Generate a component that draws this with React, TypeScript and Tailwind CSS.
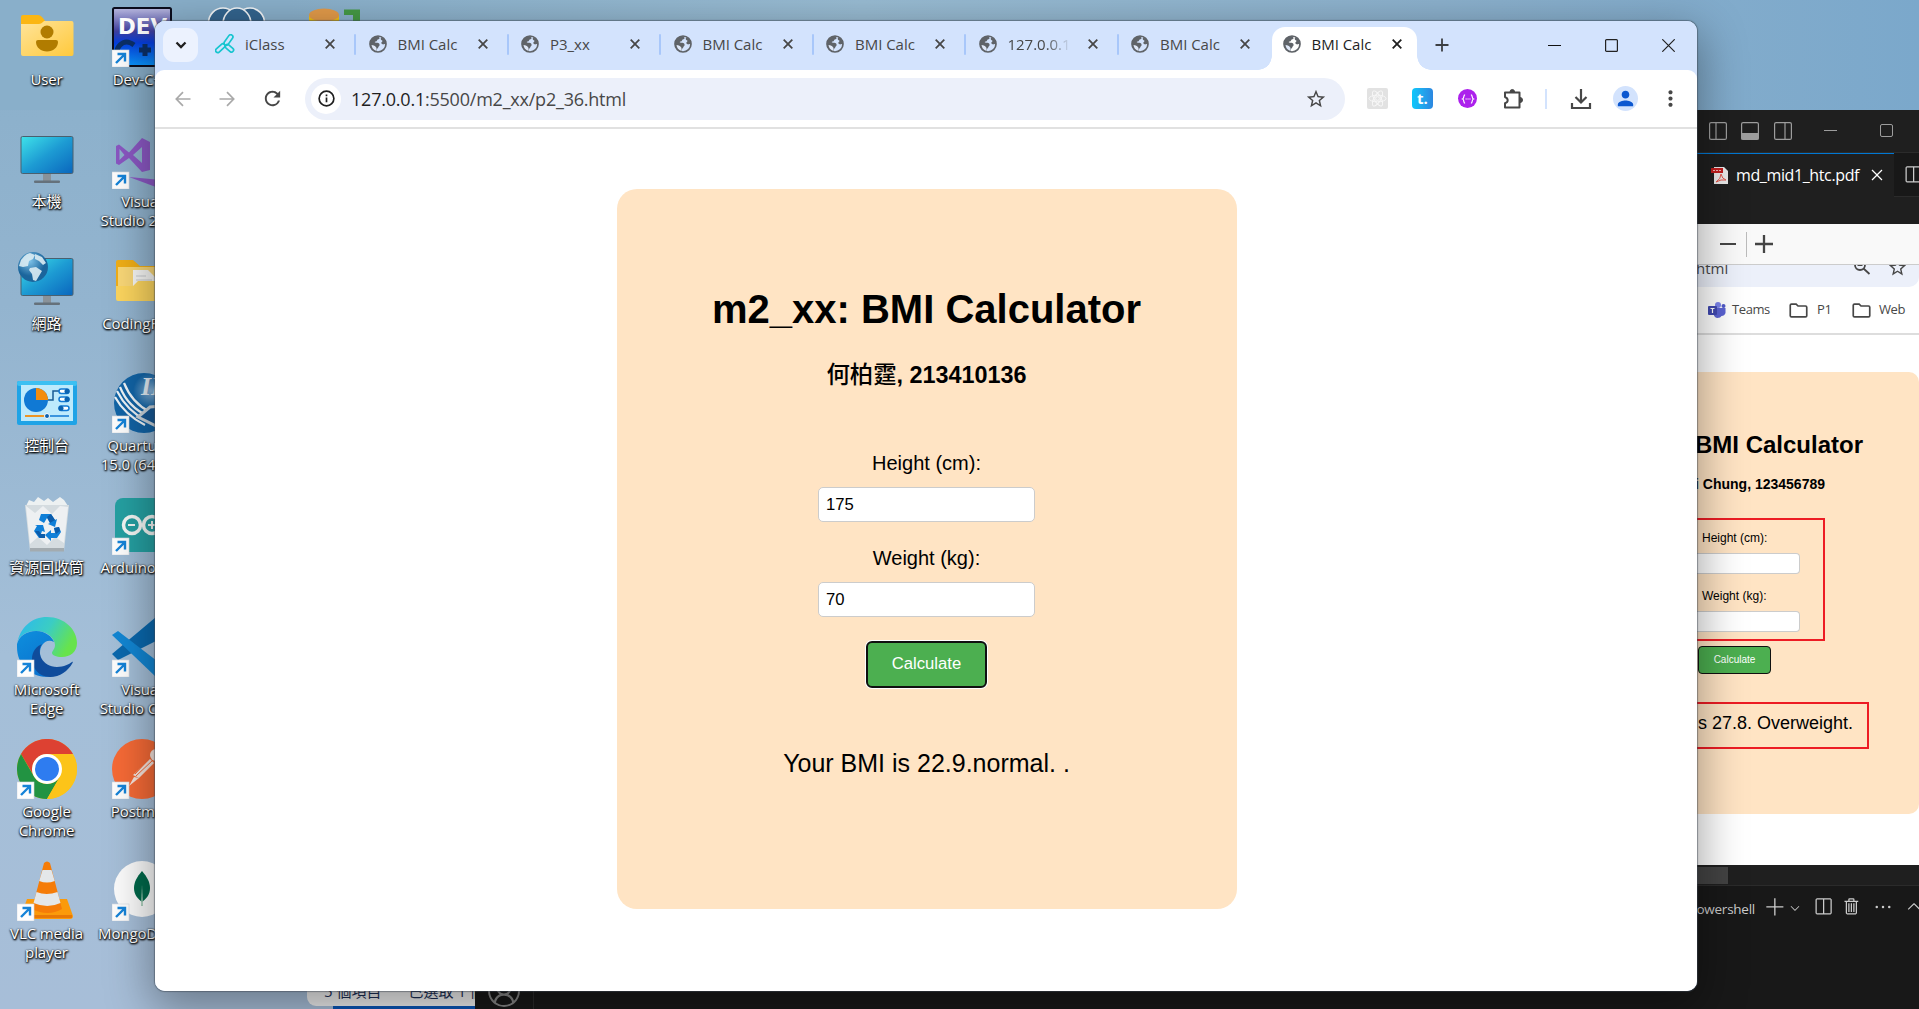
import React from "react";
import { MdStarBorder, MdRefresh, MdMoreVert, MdPerson } from "react-icons/md";
import { VscSplitHorizontal, VscTrash, VscAdd, VscChevronDown, VscChevronUp, VscClose, VscEllipsis, VscAccount } from "react-icons/vsc";

/* ---------- Desktop icons ---------- */

const Shortcut = () => (
  <g>
    <rect x="0" y="43" width="17" height="17" fill="#fdfdfd" stroke="#d5dbe0" strokeWidth="0.6" />
    <path d="M4 56 L12.5 47.5 M5.5 47 H13 V54.5" stroke="#1583d8" strokeWidth="2.4" fill="none" />
  </g>
);

const Art = ({ children }: { children: React.ReactNode }) => (
  <svg viewBox="0 0 60 60" className="h-[60px] w-[60px] shrink-0">{children}</svg>
);

const UserFolder = () => (
  <Art>
    <defs>
      <linearGradient id="fold" x1="0" y1="0" x2="1" y2="1"><stop offset="0" stopColor="#ffe49a" /><stop offset="1" stopColor="#ffc93c" /></linearGradient>
    </defs>
    <path d="M4 10q0-2 2-2h15q2 0 4 2l4 5v8H4z" fill="#fbb613" />
    <path d="M4 17h18q2 0 4-2l1-1h27.500q2 0 2 2v31q0 2-2 2H6q-2 0-2-2z" fill="url(#fold)" />
    <circle cx="30" cy="25" r="6.500" fill="#b17c00" />
    <path d="M21 33h18q2 0 2 2c0 5.500-5 9.500-11 9.500s-11-4-11-9.500q0-2 2-2z" fill="#b17c00" />
  </Art>
);

const MonitorShape = () => (
  <g>
    <defs>
      <linearGradient id="mon" x1="0" y1="0" x2="1" y2="1"><stop offset="0" stopColor="#3fe3ea" /><stop offset=".5" stopColor="#1d9bd3" /><stop offset="1" stopColor="#0a66bd" /></linearGradient>
    </defs>
    <rect x="26" y="44" width="8" height="8" fill="#8a9299" />
    <rect x="17" y="51.500" width="26" height="2.500" rx="1" fill="#65717b" />
    <rect x="4" y="7.500" width="52" height="37" rx="1.500" fill="url(#mon)" stroke="#4a606f" strokeWidth="1" />
  </g>
);

const Computer = () => <Art><MonitorShape /></Art>;

const Network = () => (
  <Art>
    <MonitorShape />
    <defs><radialGradient id="glb" cx=".4" cy=".3"><stop offset="0" stopColor="#7ec2e8" /><stop offset="1" stopColor="#1b659c" /></radialGradient></defs>
    <circle cx="16" cy="16" r="15" fill="url(#glb)" />
    <path d="M4 9q4-6 9-7l5 2-2 4-4 2-1 5-5 1-4-1zM18 3l7 3 4 6-3 2-4-4-4-2zM13 17l6-1 6 4-3 5-3 5-3-1-1-6-3-4z" fill="#dcecf3" opacity=".9" />
  </Art>
);

const ControlPanel = () => (
  <Art>
    <rect x="0" y="8" width="60" height="44" rx="2" fill="#1fa3e6" />
    <rect x="0" y="8" width="60" height="5" rx="2" fill="#3cc0f2" />
    <rect x="4" y="12" width="52" height="36" fill="#bdeafc" />
    <circle cx="19" cy="27" r="12" fill="#1079d4" />
    <path d="M19 15a12 12 0 0 1 12 12H19z" fill="#f28c0d" />
    <path d="M31 27h5v-9h7" stroke="#175b94" strokeWidth="1.500" fill="none" />
    <g fill="#fff" stroke="#1079d4" strokeWidth="1.500">
      <rect x="42" y="16" width="10" height="4.500" rx="2.200" /><rect x="42" y="24" width="10" height="4.500" rx="2.200" /><rect x="42" y="33" width="10" height="4.500" rx="2.200" />
    </g>
    <g fill="#0b62b0"><circle cx="50" cy="18.300" r="2.500" /><circle cx="50" cy="26.300" r="2.500" /><circle cx="44" cy="35.300" r="2.500" /></g>
    <path d="M8 43h21" stroke="#f28c0d" strokeWidth="1.800" /><path d="M30 43h22" stroke="#1079d4" strokeWidth="1.500" />
    <circle cx="30" cy="43" r="2.500" fill="#0b62b0" stroke="#fff" />
  </Art>
);

const RecycleBin = () => (
  <Art>
    <path d="M9 11l3-6 5 2 4-5 6 4 4-3 5 4 7-5 4 3 4 6z" fill="#edf1f2" />
    <path d="M8 10h44l-5 46H13z" fill="#d5dce0" />
    <path d="M9 11l9 7 8-7 9 8 8-8 8 1-4 36-9-6-8 8-9-8-8 7z" fill="#f5f7f8" opacity=".75" />
    <path d="M13 53h34v3.500H13z" fill="#a3abb0" />
    <g fill="#0f7fd8">
      <path d="M24 19h10l4 6 2-1-2 8-7-3 2-1-3-5-3 5-5-3z" />
      <path d="M37 33l5-1 2 5-4 6h-6v3l-6-6 6-5v3h4z" />
      <path d="M18 30l8 0 2 7-3-1-1 3 3 4h-5l-5-7 3-5z" />
    </g>
    <path d="M18 36l5 7h5v-4h-4l-2-3zM34 19l4 6-5 3-3-6zM37 33l5-1 1 4-4 3z" fill="#0b5cab" />
  </Art>
);

const Edge = () => (
  <Art>
    <defs>
      <linearGradient id="e1" x1="0" y1="0" x2="1" y2=".4"><stop offset="0" stopColor="#2bb7f2" /><stop offset=".55" stopColor="#3bcdc3" /><stop offset="1" stopColor="#67e34c" /></linearGradient>
      <linearGradient id="e2" x1="0" y1="0" x2=".6" y2="1"><stop offset="0" stopColor="#0e8fdd" /><stop offset="1" stopColor="#0a72cf" /></linearGradient>
    </defs>
    <path d="M0 27C3 10 15 0 30 0c18 0 30 13 30 26 0 9-7 14-15 14-6 0-10-2-10-4s3-4 3-8c0-6-7-14-19-14C8 14 1 20 0 27z" fill="url(#e1)" />
    <path d="M0 27C2 19 10 14 19 14c10 0 16 6 18 11-8-4-14 3-14 11 0 12 9 19 18 22-22 7-41-7-41-28z" fill="url(#e2)" />
    <path d="M25 27c-6 8 0 23 15 23 7 0 12-3 15-5 1-.5 1 0 .5 1C51 54 43 60 33 60 21 60 15 50 15 42c0-8 5-13 10-15z" fill="#0f4c9c" />
    <Shortcut />
  </Art>
);

const Chrome = () => (
  <Art>
    <circle cx="30" cy="30" r="30" fill="#fcc419" />
    <path d="M4 15A30 30 0 0 1 56 15H30a15 15 0 0 0-13 22z" fill="#dd4132" />
    <path d="M4 15l13 22.500A15 15 0 0 0 43 37.500L30 60A30 30 0 0 1 4 15z" fill="#229342" />
    <path d="M56 15A30 30 0 0 1 30 60l13-22.500A15 15 0 0 0 42 15z" fill="#fcc419" />
    <circle cx="30" cy="30" r="15" fill="#fff" /><circle cx="30" cy="30" r="12" fill="#2e7cf0" />
    <Shortcut />
  </Art>
);

const Vlc = () => (
  <Art>
    <path d="M10 38h40l6 17q0 3-3 3H7q-3 0-3-3z" fill="#fb9a0a" /><path d="M5 54h50v3H5z" fill="#e87906" />
    <path d="M27 2q3-3 6 0l12 46q-14 8-30 0z" fill="#f57c08" />
    <path d="M25.500 9h9l3.200 11q-7.700 3-15.500 0zM19.500 31q10 4 21 0l3 11q-13 6-27 0z" fill="#e4e7e9" />
    <Shortcut />
  </Art>
);

const DevCpp = () => (
  <Art>
    <defs><linearGradient id="dev" x1="0" y1="0" x2="0" y2="1"><stop offset="0" stopColor="#b9b9df" /><stop offset=".4" stopColor="#3f3f9e" /><stop offset=".6" stopColor="#063edc" /><stop offset="1" stopColor="#0a97ff" /></linearGradient></defs>
    <rect x="1" y="1" width="58" height="58" rx="1.500" fill="url(#dev)" stroke="#0b0d1d" strokeWidth="2" />
    <text x="6" y="27" fontSize="22" fontWeight="bold" fontFamily="DejaVu Sans" fill="#fff" textLength="49" lengthAdjust="spacingAndGlyphs">DEV</text>
    <path d="M22 38q-8-6-14 0t0 14M33 37v12M27 43h12" stroke="#0b2f66" strokeWidth="5" fill="none" />
    <Shortcut />
  </Art>
);

const VisualStudio = () => (
  <Art>
    <path fillRule="evenodd" d="M4 17l3-1.500 10 8L30 9l8 4v28l-8 2-13-14-10 7-3-1.500zM7.500 20v11l5-5zM21 26l9 8V18z" fill="#8a57c2" />
    <path d="M17 48l43 4v12z" fill="#8a57c2" />
    <Shortcut />
  </Art>
);

const CodingFolder = () => (
  <Art>
    <path d="M4 11q0-2 2-2h15l7 6h28v30H4z" fill="#f0ae17" />
    <path d="M6 16h50v20H6z" fill="#f9d777" /><path d="M21 19h15l8 8v12H21z" fill="#f7f7f5" /><path d="M24 25h10M24 29h16M24 33h16" stroke="#c9ccd0" />
    <path d="M4 35h17l5-5h32v20H6q-2 0-2-2z" fill="#fcd55e" />
  </Art>
);

const Quartus = () => (
  <Art>
    <defs><radialGradient id="quar" cx=".62" cy=".3"><stop offset="0" stopColor="#8cb6da" /><stop offset=".6" stopColor="#1264a6" /></radialGradient></defs>
    <circle cx="32" cy="30" r="30" fill="url(#quar)" />
    <path d="M8 14q8 20 28 29M5 18q10 20 30 30M3 24q10 18 30 28M12 10q8 20 26 29" stroke="#eef4f8" strokeWidth="2.200" fill="none" />
    <path d="M26 44l12-10 24-2v30z" fill="#175996" stroke="#c9d3da" strokeWidth="3" />
    <text x="29" y="22" fontSize="26" fontStyle="italic" fontWeight="bold" fontFamily="Liberation Serif" fill="#e5eef6">II</text>
    <Shortcut />
  </Art>
);

const Arduino = () => (
  <Art>
    <rect x="3" y="3" width="60" height="54" rx="8" fill="#25a0a2" />
    <g fill="none" stroke="#f4f7f5" strokeWidth="3.500"><circle cx="20" cy="30" r="8.500" /><circle cx="40" cy="30" r="8.500" /><path d="M16 30h7M36 30h8M40 26v8" strokeWidth="2" /></g>
    <Shortcut />
  </Art>
);

const VsCode = () => (
  <Art>
    <path d="M0 37L44 0l14 5v12L6 43z" fill="#0a68ad" />
    <path d="M0 18l6-4 52 40-14 6z" fill="#1286d3" />
    <Shortcut />
  </Art>
);

const Postman = () => (
  <Art>
    <circle cx="30" cy="30" r="30" fill="#f66a36" />
    <circle cx="44" cy="16" r="6" fill="#f6e4dc" />
    <path d="M38 20l4 4-15 15-6-3zM22 38l5 1-10 8z" fill="#f6e4dc" /><path d="M41 21L24 37M37 20l-14 15" stroke="#f66a36" />
    <Shortcut />
  </Art>
);

const Mongo = () => (
  <Art>
    <circle cx="30" cy="28" r="28" fill="#fbfbfb" />
    <path d="M30 10c5 6 8 11 8 17 0 7-4 11-8 14-4-3-8-7-8-14 0-6 3-11 8-17z" fill="#00684a" /><path d="M30 24l1 21h-2z" fill="#a9cdb9" />
    <Shortcut />
  </Art>
);

const PgAdmin = () => (
  <Art>
    <g fill="#33658f" stroke="#f3f6f8" strokeWidth="1.600"><ellipse cx="16" cy="16" rx="14.500" ry="15" /><ellipse cx="43" cy="16" rx="14.500" ry="15" /><ellipse cx="30" cy="17" rx="14" ry="16" /></g>
  </Art>
);

const Database = () => (
  <Art>
    <path d="M7 8v30h30V8z" fill="#f3c30f" /><ellipse cx="22" cy="8" rx="15" ry="6.500" fill="#e39b4a" />
    <path d="M42 2.500h16V20h-7V8h-9z" fill="#459a45" />
  </Art>
);

type Item = { label: string; art: React.ReactNode };
const columns: Item[][] = [
  [
    { label: "User", art: <UserFolder /> },
    { label: "本機", art: <Computer /> },
    { label: "網路", art: <Network /> },
    { label: "控制台", art: <ControlPanel /> },
    { label: "資源回收筒", art: <RecycleBin /> },
    { label: "Microsoft\nEdge", art: <Edge /> },
    { label: "Google\nChrome", art: <Chrome /> },
    { label: "VLC media\nplayer", art: <Vlc /> },
  ],
  [
    { label: "Dev-C++", art: <DevCpp /> },
    { label: "Visual\nStudio 2022", art: <VisualStudio /> },
    { label: "CodingFiles", art: <CodingFolder /> },
    { label: "Quartus II\n15.0 (64-bit)", art: <Quartus /> },
    { label: "Arduino IDE", art: <Arduino /> },
    { label: "Visual\nStudio Code", art: <VsCode /> },
    { label: "Postman", art: <Postman /> },
    { label: "MongoDBCo", art: <Mongo /> },
  ],
  [{ label: "", art: <PgAdmin /> }],
  [{ label: "", art: <Database /> }],
];

const Desktop = () => (
  <div className="-ml-px flex pt-[7px]">
    {columns.map((items, c) => (
      <div key={c} className="flex w-[95px] shrink-0 flex-col">
        {items.map((it, i) => (
          <div key={i} className="flex h-[122px] flex-col items-center">
            {it.art}
            <div className="whitespace-pre pt-[3px] text-center text-[15px] leading-[19px] tracking-[-0.1px] text-white [text-shadow:1px_1px_2px_#000,0_1px_2px_#000,0_0_2px_#0009]">{it.label}</div>
          </div>
        ))}
      </div>
    ))}
  </div>
);

/* ---------- Browser window ---------- */

const Globe = () => (
  <svg viewBox="0 0 18 18" className="h-[18px] w-[18px] shrink-0">
    <circle cx="9" cy="9" r="8" fill="none" stroke="#5f6368" strokeWidth="1.700" />
    <path d="M1 8.500C1.500 4 5 1 9.500 1l1 1.800c.3 1-.8 1.500-1.700 1.700-.8.300-.5 1.300-1.300 1.700-.7.300-1.700 0-1.700.9 0 .8 1.400.7 2.600.7 1.500 0 2.200 1 2.200 2.100s-1.300 1.200-1.300 2.300c0 1-1.300.9-1.400 2.600L7.500 17C3.500 16 1 12.500 1 8.500z" fill="#5f6368" />
    <path d="M2.500 10c2 0 4 1.200 4.700 2.600.6 1.400.5 2.700.3 3.400C4.500 15 2.800 13 2.500 10z" fill="#dfe8f8" />
    <path d="M12 2.500c-.5 1.200-.3 2.500.7 2.700 1 .2 1 1.200.1 1.900-.9.600-.5 2 .7 2.200 1.200.3 1.500-.4 3.300-.3C16.800 5.500 14.800 3 12 2.500z" fill="#5f6368" />
  </svg>
);

const ClassMark = () => (
  <svg viewBox="0 0 20 20" className="h-[20px] w-[20px] shrink-0" fill="none" stroke="#17c5cf" strokeWidth="1.700">
    <rect x="11.300" y="0" width="4.400" height="12" rx="2.200" transform="rotate(35 13.500 6)" />
    <rect x="3.200" y="8.700" width="4.200" height="11" rx="2.100" transform="rotate(48 5.300 14.200)" />
    <rect x="12.300" y="9.500" width="4.200" height="9.500" rx="2.100" transform="rotate(-50 14.400 14.200)" />
  </svg>
);

const Cross = ({ bold }: { bold?: boolean }) => (
  <svg viewBox="0 0 10 10" className="h-[10px] w-[10px] shrink-0"><path d="M.7.7l8.600 8.600M9.300.7L.7 9.300" stroke={bold ? "#1f1f1f" : "#474747"} strokeWidth="1.800" /></svg>
);

const TabBody = ({ title, mark, bold }: { title: string; mark?: React.ReactNode; bold?: boolean }) => (
  <div className={`flex h-[34px] w-[150px] items-center pl-[11px] ${bold ? "text-[#1f1f1f]" : "text-[#474747]"}`}>
    <div className="flex w-[20px] justify-center">{mark ?? <Globe />}</div>
    <div className={`ml-[10px] w-[63px] overflow-hidden whitespace-nowrap text-[15px] tracking-[-0.02px] ${title.startsWith("127") ? "[mask-image:linear-gradient(90deg,#000_60%,transparent)]" : ""}`}>{title}</div>
    <div className="ml-[17px]"><Cross bold={bold} /></div>
  </div>
);

const tabs = ["iClass", "BMI Calc", "P3_xx", "BMI Calc", "BMI Calc", "127.0.0.1:5500", "BMI Calc"];

const TabStrip = () => (
  <div className="flex h-[49px] items-start bg-[#d3e3fd] pl-[8px]">
    <div className="mt-[7px] flex h-[34px] w-[35px] items-center justify-center rounded-[11px] bg-[#ecf2fe]">
      <svg viewBox="0 0 12 8" className="h-[8px] w-[12px]"><path d="M1.500 1.500L6 6l4.500-4.500" fill="none" stroke="#1f1f1f" strokeWidth="2.300" /></svg>
    </div>
    <div className="ml-[6px] flex pt-[6px]">
      {tabs.map((t, i) => (
        <div key={i} className="flex w-[152.500px] items-center">
          <TabBody title={t} mark={i === 0 ? <ClassMark /> : undefined} />
          {i < 6 && <div className="h-[21px] w-[2px] shrink-0 rounded bg-[#a8c7fa]" />}
        </div>
      ))}
    </div>
    <div className="mt-[6px] flex h-[43px]">
      <div className="-ml-[14px] h-[14px] w-[14px] self-end bg-[radial-gradient(circle_at_0_0,#d3e3fd_13.500px,#fff_14px)]" />
      <div className="flex w-[145px] rounded-t-[13px] bg-white"><div className="-ml-px"><TabBody title="BMI Calc" bold /></div></div>
      <div className="h-[14px] w-[14px] self-end bg-[radial-gradient(circle_at_100%_0,#d3e3fd_13.500px,#fff_14px)]" />
    </div>
    <svg viewBox="0 0 14 14" className="ml-[4px] mt-[17px] h-[14px] w-[14px]"><path d="M7 .5v13M.5 7h13" stroke="#3c3f43" strokeWidth="1.800" /></svg>
    <div className="ml-auto mr-[22px] flex gap-[44px] pt-[18px]">
      <svg viewBox="0 0 13 13" className="h-[13px] w-[13px]"><path d="M0 6.500h13" stroke="#111" strokeWidth="1.200" /></svg>
      <svg viewBox="0 0 13 13" className="h-[13px] w-[13px]"><rect x=".6" y=".6" width="11.800" height="11.800" rx="1" fill="none" stroke="#222" strokeWidth="1.200" /></svg>
      <svg viewBox="0 0 13 13" className="h-[13px] w-[13px]"><path d="M.3.3l12.400 12.400M12.700.3L.3 12.700" stroke="#222" strokeWidth="1.200" /></svg>
    </div>
  </div>
);

const Arrow = ({ flip }: { flip?: boolean }) => (
  <svg viewBox="0 0 16 16" className={`h-[16px] w-[16px] ${flip ? "-scale-x-100" : ""}`}><path d="M15.500 8H1.500M8 1.200L1.300 8 8 14.800" fill="none" stroke="#a9a9a9" strokeWidth="1.700" /></svg>
);

const Toolbar = () => (
  <div className="rounded-t-[9px] bg-white">
    <div className="flex h-[57px] items-center pl-[20px] text-[#474747]">
      <Arrow /><div className="ml-[28px]"><Arrow flip /></div>
      <MdRefresh className="ml-[26px] h-[23px] w-[23px]" />
      <div className="ml-[21px] flex h-[42px] w-[1040px] items-center rounded-full bg-[#ecf0fa] pl-[6px] pr-[18px]">
        <div className="flex h-[30px] w-[30px] items-center justify-center rounded-full bg-white">
          <svg viewBox="0 0 18 18" className="h-[17px] w-[17px]"><circle cx="9" cy="9" r="7.800" fill="none" stroke="#1f1f1f" strokeWidth="1.800" /><path d="M9 8v5M9 4.800v1.700" stroke="#1f1f1f" strokeWidth="1.800" /></svg>
        </div>
        <div className="ml-[10px] pt-px text-[18px] tracking-[-0.22px] text-[#474747]"><span className="text-[#1f1f1f]">127.0.0.1</span>:5500/m2_xx/p2_36.html</div>
        <MdStarBorder className="ml-auto h-[22px] w-[22px]" />
      </div>
      <div className="ml-[22px] flex h-[21px] w-[21px] items-center justify-center rounded-[2px] bg-[#e2e2e2]">
        <svg viewBox="0 0 20 20" className="h-[19px] w-[19px]" fill="none" stroke="#f8f8f8"><ellipse cx="10" cy="10" rx="9" ry="3.500" /><ellipse cx="10" cy="10" rx="9" ry="3.500" transform="rotate(60 10 10)" /><ellipse cx="10" cy="10" rx="9" ry="3.500" transform="rotate(120 10 10)" /><circle cx="10" cy="10" r="2" /></svg>
      </div>
      <div className="ml-[24px] flex h-[21px] w-[21px] items-center justify-center rounded-[4px] bg-linear-to-r from-[#08c8fb] to-[#2b86e0] pb-px text-[15px] font-bold leading-none text-white">t.</div>
      <div className="ml-[25px] flex h-[19px] w-[19px] items-center justify-center rounded-full bg-[#ac20ec]">
        <svg viewBox="0 0 16 12" className="h-[10px] w-[14px]" fill="none" stroke="#fff" strokeWidth="1.400"><path d="M4.500 1C2 1 4 5 1.500 6 4 7 2 11 4.500 11M11.500 1C14 1 12 5 14.500 6 12 7 14 11 11.500 11" /><path d="M5 6h1.500M7.300 6h1.500M9.600 6h1.500" /></svg>
      </div>
      <svg viewBox="0 0 22 22" className="ml-[25px] h-[22px] w-[22px]"><path d="M3 4.500h14.500v15H3v-4.200q2.700-.8 2.700-3T3 9z" fill="none" stroke="#474747" strokeWidth="2" strokeLinejoin="round" /><path d="M8 4a2.300 2.500 0 0 1 4.600 0zM18 9.500a2.500 2.500 0 0 1 0 5z" fill="#474747" stroke="#474747" /></svg>
      <div className="ml-[21px] h-[20px] w-[2px] bg-[#d3e3fd]" />
      <svg viewBox="0 0 22 22" className="ml-[23px] h-[22px] w-[22px]" fill="none" stroke="#474747" strokeWidth="2.200"><path d="M11 1v13M5.500 9l5.500 5.500L16.500 9M2 15v5h18v-5" /></svg>
      <div className="ml-[21px] flex h-[25px] w-[25px] items-center justify-center rounded-full bg-[#d3e3fd]"><MdPerson className="h-[23px] w-[23px] text-[#0b57d0]" /></div>
      <MdMoreVert className="ml-[20px] h-[25px] w-[25px]" />
    </div>
    <div className="h-[2px] bg-[#e1e1e1]" />
  </div>
);

const Field = ({ label, value }: { label: string; value: string }) => (
  <div className="flex flex-col items-center">
    <label className="text-[20px] leading-[24px]">{label}</label>
    <div className="mt-[12px] h-[35px] w-[217px] rounded-[5px] border border-[#ccc] bg-white pl-[7px] text-[16.670px] leading-[33px]">{value}</div>
  </div>
);

const Browser = () => (
  <div className="absolute left-[155px] top-[21px] flex h-[970px] w-[1542px] flex-col overflow-hidden rounded-[10px] bg-[#d3e3fd]">
    <TabStrip />
    <Toolbar />
    <div className="flex flex-1 justify-center bg-white pl-px pt-[60px] font-['Liberation_Sans','Noto_Sans_CJK_TC',sans-serif] text-black">
      <div className="flex h-[720px] w-[620px] flex-col items-center rounded-[20px] bg-[#ffe4c4] pt-[97px]">
        <h1 className="text-[40px] font-bold leading-[46px]">m2_xx: BMI Calculator</h1>
        <h3 className="mt-[29px] text-[23.400px] font-bold leading-[28px]"><span className="font-medium">何柏霆</span>, 213410136</h3>
        <div className="mt-[62px] flex flex-col gap-[24px]">
          <Field label="Height (cm):" value="175" />
          <Field label="Weight (kg):" value="70" />
        </div>
        <div className="mt-[24px] h-[47px] w-[121px] rounded-[6px] border-2 border-[#101010] bg-[#4caf50] pt-[11px] text-center text-[16.670px] leading-[19px] text-white ring-1 ring-white">Calculate</div>
        <p className="mt-[60px] text-[25px] leading-[30px]">Your BMI is 22.9.normal. .</p>
      </div>
    </div>
  </div>
);

/* ---------- Editor window behind the browser ---------- */

const LayoutIcon = ({ d, fill }: { d: string; fill?: boolean }) => (
  <svg viewBox="0 0 18 18" className="h-[18px] w-[18px]" fill="none" stroke="#9d9d9d" strokeWidth="1.200"><rect x=".6" y=".6" width="16.800" height="16.800" rx="1.500" /><path d={d} fill={fill ? "#9d9d9d" : "none"} /></svg>
);

const FolderIcon = () => (
  <svg viewBox="0 0 20 16" className="h-[15px] w-[19px] shrink-0"><path d="M1.200 2.500q0-1.300 1.300-1.300h5l2 2h8q1.300 0 1.300 1.300v9q0 1.300-1.300 1.300h-15q-1.300 0-1.300-1.300z" fill="none" stroke="#474747" strokeWidth="1.800" /></svg>
);

const SmallField = ({ label }: { label: string }) => (
  <div>
    <div className="pl-[5px] text-[12px] leading-[14px]">{label}</div>
    <div className="mt-[8px] h-[21px] w-[103px] rounded-r-[4px] border border-l-0 border-[#ccc] bg-white" />
  </div>
);

const PdfPage = () => (
  <div className="flex h-[641px] flex-col overflow-hidden bg-white text-[#474747]">
    <div className="flex h-[41px] shrink-0 items-center border-b border-[#ccc] bg-[#f9f9f9] pl-[23px]">
      <div className="h-[2.500px] w-[16px] bg-[#444]" />
      <div className="ml-[10px] h-[25px] w-px bg-[#bbb]" />
      <svg viewBox="0 0 18 18" className="ml-[8px] h-[18px] w-[18px]"><path d="M9 0v18M0 9h18" stroke="#444" strokeWidth="2.300" /></svg>
    </div>
    <div className="flex h-[22px] shrink-0 overflow-hidden rounded-br-[10px] bg-[#ecf0fa]">
      <div className="-ml-px -mt-[8px] text-[15px] leading-[22px]">html</div>
      <svg viewBox="0 0 18 18" className="-mt-[7px] ml-[125px] h-[18px] w-[18px]"><circle cx="7" cy="7" r="5" fill="none" stroke="#474747" strokeWidth="1.800" /><path d="M10.500 10.500l6 5.500M4.500 7h5" stroke="#474747" strokeWidth="1.800" /></svg>
      <MdStarBorder className="-mt-[8px] ml-[16px] h-[21px] w-[21px]" />
    </div>
    <div className="flex h-[48px] shrink-0 items-center border-b-2 border-[#ddd] pl-[11px] text-[13px] tracking-[-0.4px]">
      <svg viewBox="0 0 18 16" className="h-[16px] w-[18px]"><circle cx="10" cy="3" r="3" fill="#7b83eb" /><circle cx="15.500" cy="4" r="2" fill="#5059c9" /><path d="M7 6h10.500v5q-1 3-4 3-1 2-4 2t-4-4z" fill="#5b63d3" /><rect x="0" y="4" width="9" height="9" rx="1" fill="#4048b0" /><path d="M2.500 6.500h4M4.500 6.500V11" stroke="#fff" strokeWidth="1.200" /></svg>
      <span className="ml-[6px] w-[38px] whitespace-nowrap">Teams</span><div className="ml-[19px]"><FolderIcon /></div>
      <span className="ml-[9px] w-[14px]">P1</span><div className="ml-[21px]"><FolderIcon /></div>
      <span className="ml-[8px]">Web</span>
    </div>
    <div className="mt-[37px] h-[442px] w-[222px] shrink-0 rounded-r-[10px] bg-[#ffe4c4] pt-[59px] font-['Liberation_Sans',sans-serif] text-black">
      <div className="-ml-px flex w-[167px] justify-end whitespace-nowrap text-[24px] font-bold leading-[28px]">BMI Calculator</div>
      <div className="mt-[17px] flex w-[128px] justify-end whitespace-nowrap text-[14px] font-bold leading-[16px]">i Chung, 123456789</div>
      <div className="mt-[26px] flex h-[123px] w-[128px] flex-col gap-[23px] border-2 border-l-0 border-[#ed1c24] pt-[11px]">
        <SmallField label="Height (cm):" />
        <div className="-mt-[8px]"><SmallField label="Weight (kg):" /></div>
      </div>
      <div className="ml-px mt-[5px] h-[28px] w-[73px] rounded-[4px] border-[1.500px] border-[#101010] bg-[#4caf50] text-center text-[10px] leading-[26px] text-white">Calculate</div>
      <div className="mt-[28px] flex h-[47px] w-[172px] items-center justify-end overflow-hidden whitespace-nowrap border-2 border-l-0 border-[#ed1c24] pb-[4px] pr-[14px] text-[18px]">s 27.8. Overweight.</div>
    </div>
  </div>
);

const Editor = () => (
  <div className="absolute left-[475px] top-[110px] flex h-[899px] w-[1444px] bg-[#181818]">
    <div className="flex w-[59px] shrink-0 flex-col items-center justify-end border-r border-[#2b2b2b] pb-[2px]">
      <VscAccount className="h-[32px] w-[32px] text-[#868686]" />
    </div>
    <div className="ml-auto flex w-[222px] flex-col overflow-hidden bg-[#1f1f1f]">
      <div className="flex h-[43px] shrink-0 items-center border-b border-[#2b2b2b] pb-px pl-[12px]">
        <LayoutIcon d="M7 1v16" />
        <div className="ml-[14px]"><LayoutIcon d="M1 11.500h16V17H1z" fill /></div>
        <div className="ml-[15px]"><LayoutIcon d="M11 1v16" /></div>
        <div className="ml-[32px] h-px w-[13px] bg-[#9d9d9d]" />
        <div className="ml-[43px] h-[13px] w-[13px] rounded-[2px] border border-[#9d9d9d]" />
      </div>
      <div className="flex h-[44px] shrink-0">
        <div className="flex w-[197px] items-center border-t border-[#0078d4] pb-px pl-[14px] text-white">
          <svg viewBox="0 0 17 17" className="h-[17px] w-[17px] shrink-0"><path d="M3 0h10l4 4v13H3z" fill="#e9e9e9" /><rect x="0" y="1" width="12" height="5" fill="#c11e1e" /><path d="M2 3.500h8" stroke="#f3b5b5" strokeWidth="1.200" strokeDasharray="2 1" /><path d="M5 15q5-3 5-8 1 5 5 6-5-1-10 2z" fill="none" stroke="#e2574c" /></svg>
          <span className="ml-[8px] w-[124px] whitespace-nowrap text-[16px] tracking-[-0.38px]">md_mid1_htc.pdf</span>
          <VscClose className="ml-[7px] h-[20px] w-[20px] shrink-0" />
        </div>
        <div className="flex flex-1 items-center overflow-hidden border-b border-[#2b2b2b] bg-[#181818] pl-[9px] text-[#ccc]"><VscSplitHorizontal className="h-[20px] w-[20px] shrink-0" /></div>
      </div>
      <div className="h-[27px] shrink-0" />
      <PdfPage />
      <div className="flex h-[21px] shrink-0 items-center border-b border-[#2b2b2b]"><div className="h-[17px] w-[31px] bg-[#434343]" /></div>
      <div className="flex flex-1 items-start bg-[#181818] pt-[11px] text-[#ccc]">
        <span className="flex w-[58px] justify-end whitespace-nowrap text-[13.500px] leading-[24px] tracking-[-0.25px]">owershell</span>
        <VscAdd className="ml-[10px] h-[21px] w-[21px] shrink-0" />
        <VscChevronDown className="ml-[2px] mt-[4px] h-[14px] w-[14px] shrink-0" />
        <VscSplitHorizontal className="ml-[11px] h-[20px] w-[20px] shrink-0" />
        <VscTrash className="ml-[9px] h-[20px] w-[20px] shrink-0" />
        <VscEllipsis className="ml-[11px] h-[20px] w-[20px] shrink-0" />
        <VscChevronUp className="ml-[11px] h-[20px] w-[20px] shrink-0" />
      </div>
    </div>
  </div>
);

export default function App() {
  return (
    <div className="relative h-[1009px] w-[1919px] overflow-hidden bg-[linear-gradient(180deg,#89afca_0%,#93b4cf_30%,#a4bfd8_65%,#a7bed8_100%)] font-['Open_Sans','Noto_Sans_CJK_TC',sans-serif]">
      <div className="absolute inset-x-0 top-0 h-[110px] bg-[linear-gradient(90deg,#89afca_0%,#89afca_15%,#98bbd2_45%,#8bb0cc_75%,#7ba8cb_100%)]" />
      <div className="absolute inset-x-0 top-0"><Desktop /></div>
      <div className="absolute left-[333px] top-[990px] h-[19px] w-[150px] bg-[#0a55b5]" />
      <div className="absolute left-[307px] top-[900px] flex h-[106px] w-[190px] items-end whitespace-nowrap rounded-bl-[9px] bg-[#f0f0f0] pb-[5px] pl-[17px] text-[15px] leading-[20px] text-[#1c2f55]">
        <span>5 個項目</span><span className="ml-[13px] h-[18px] w-px bg-[#ccc]" /><span className="ml-[14px]">已選取 1 個項目</span>
      </div>
      <Editor />
      <div className="absolute left-[155px] top-[21px] h-[970px] w-[1542px] rounded-[10px] shadow-[0_0_1px_1px_rgba(60,70,80,0.5),0_14px_45px_4px_rgba(0,0,0,0.36)]" />
      <Browser />
    </div>
  );
}
